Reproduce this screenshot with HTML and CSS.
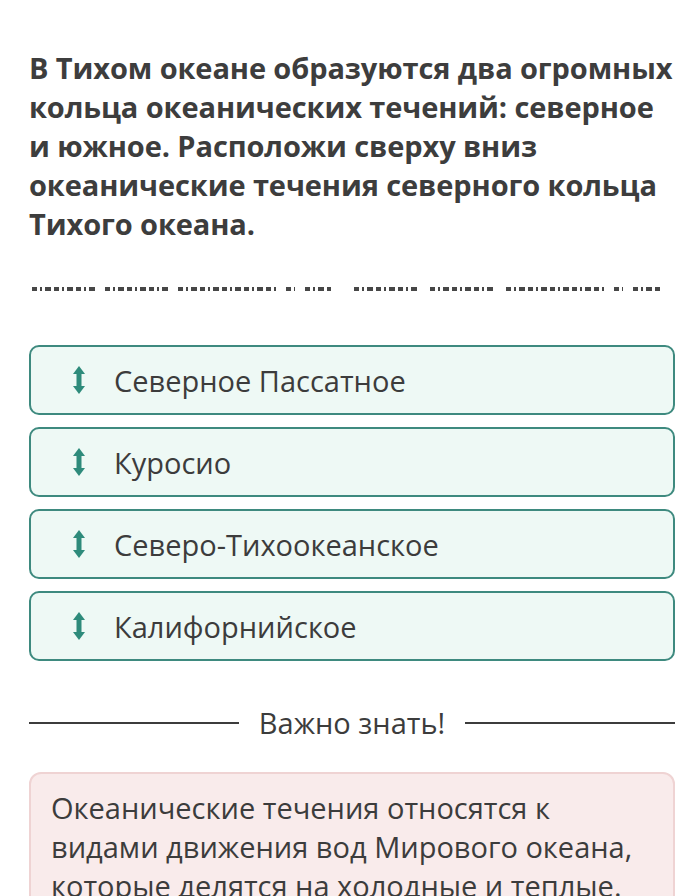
FILE: index.html
```html
<!DOCTYPE html>
<html lang="ru">
<head>
<meta charset="UTF-8">
<meta name="viewport" content="width=device-width, initial-scale=1.0">
<title>Тихий океан</title>
<link rel="stylesheet" href="styles.css">
</head>
<body>

<div class="page">

<!-- QUESTION -->
<h1 class="question">В Тихом океане образуются два огромных кольца океанических течений: северное и южное. Расположи сверху вниз океанические течения северного кольца Тихого океана.</h1>

<!-- HIDDEN HINT -->
<div class="hint">
  <div class="hint-group">
    <span class="w" style="width:63px"></span>
    <span class="w" style="width:63px"></span>
    <span class="w" style="width:98px"></span>
    <span class="w" style="width:9px"></span>
    <span class="w" style="width:26px"></span>
  </div>
  <div class="hint-group">
    <span class="w" style="width:66px"></span>
    <span class="w" style="width:66px"></span>
    <span class="w" style="width:98px"></span>
    <span class="w" style="width:9px"></span>
    <span class="w" style="width:27px"></span>
  </div>
</div>

<!-- SORT ITEMS -->
<div class="items">
  <div class="item">
    <svg class="drag" viewBox="0 0 12 28"><path d="M6 0 L12 8 H8.5 V20 H12 L6 28 L0 20 H3.5 V8 H0 Z"/></svg>
    <span>Северное Пассатное</span>
  </div>
  <div class="item">
    <svg class="drag" viewBox="0 0 12 28"><path d="M6 0 L12 8 H8.5 V20 H12 L6 28 L0 20 H3.5 V8 H0 Z"/></svg>
    <span>Куросио</span>
  </div>
  <div class="item">
    <svg class="drag" viewBox="0 0 12 28"><path d="M6 0 L12 8 H8.5 V20 H12 L6 28 L0 20 H3.5 V8 H0 Z"/></svg>
    <span>Северо-Тихоокеанское</span>
  </div>
  <div class="item">
    <svg class="drag" viewBox="0 0 12 28"><path d="M6 0 L12 8 H8.5 V20 H12 L6 28 L0 20 H3.5 V8 H0 Z"/></svg>
    <span>Калифорнийское</span>
  </div>
</div>

<!-- NOTE -->
<div class="divider"><span>Важно знать!</span></div>

<div class="note">
  Океанические течения относятся к видами движения вод Мирового океана, которые делятся на холодные и теплые.
</div>

</div>

</body>
</html>
```

FILE: styles.css
```css
/* RESET */
*{
  margin:0;
  padding:0;
  box-sizing:border-box;
}

body{
  background:#fff;
  color:#3c3c3c;
  font-family:"Open Sans", Arial, sans-serif;
}

.page{
  width:646px;
  margin-left:29px;
  padding-top:48px;
}

/* QUESTION */
.question{
  font-size:29px;
  font-weight:700;
  line-height:39px;
  letter-spacing:-0.1px;
  color:#3d3d3d;
}

/* HINT DASHES */
.hint{
  display:flex;
  gap:23px;
  margin-top:44px;
  padding-left:3px;
}

.hint-group{
  display:flex;
  gap:10px;
}

.w{
  display:block;
  height:4px;
  background:repeating-linear-gradient(90deg,
    #474747 0 5px, transparent 5px 8px,
    #474747 8px 10px, transparent 10px 13px,
    #474747 13px 19px, transparent 19px 22px);
}

/* ITEMS */
.items{
  display:flex;
  flex-direction:column;
  gap:12px;
  margin-top:54px;
}

.item{
  height:70px;
  display:flex;
  align-items:center;
  gap:29px;
  padding-left:42px;
  background:#eef9f5;
  border:2px solid #3e8a7f;
  border-radius:10px;
  font-size:29px;
  color:#3c3c3c;
}

.drag{
  width:12px;
  height:28px;
  fill:#2e8b7b;
}

/* DIVIDER */
.divider{
  display:flex;
  align-items:center;
  gap:20px;
  margin-top:42px;
  font-size:29px;
  line-height:40px;
  color:#3c3c3c;
}

.divider::before,
.divider::after{
  content:"";
  flex:1;
  height:2px;
  background:#3c3c3c;
}

/* NOTE */
.note{
  margin-top:29px;
  padding:14px 20px 20px 20px;
  background:#f9ebeb;
  border:2px solid #efd3d3;
  border-radius:12px;
  font-size:29px;
  line-height:39px;
  color:#3c3c3c;
}
```
